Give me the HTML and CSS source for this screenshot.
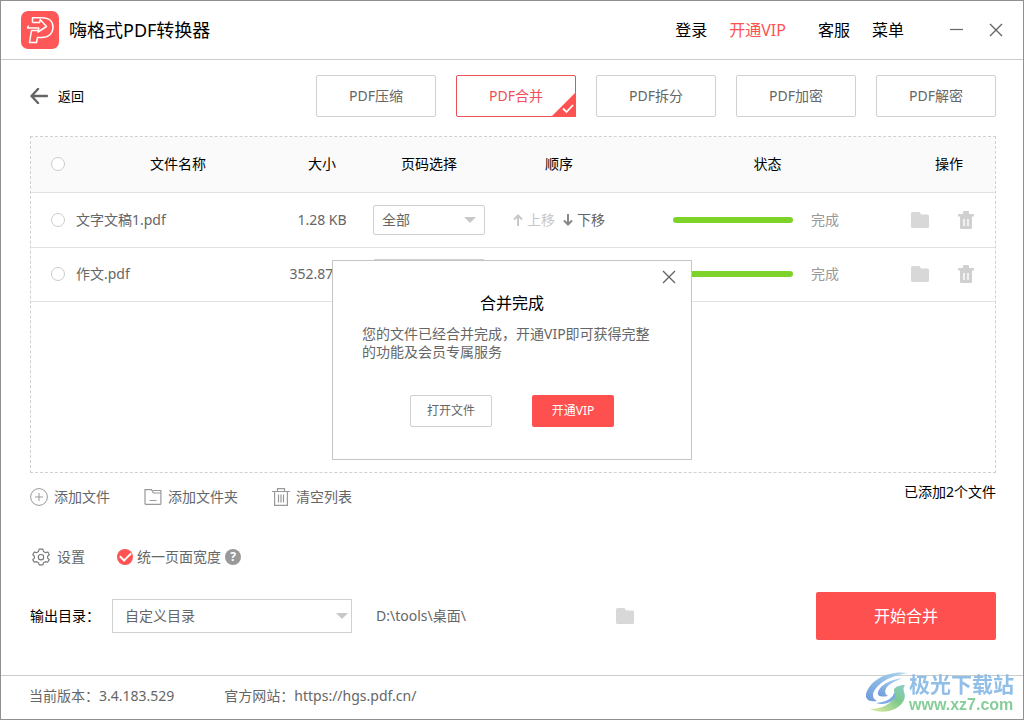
FILE: index.html
```html
<!DOCTYPE html>
<html lang="zh-CN">
<head>
<meta charset="utf-8">
<meta name="viewport" content="width=device-width, initial-scale=1">
<title>嗨格式PDF转换器</title>
<link rel="stylesheet" href="styles.css">
</head>
<body>
<svg class="sprite" aria-hidden="true">
  <symbol id="folder" viewBox="0 0 18 16"><path d="M1.500 0H8Q9 0 9.500 1.500L10 2.500H16.500Q18 2.500 18 4V14.500Q18 16 16.500 16H1.500Q0 16 0 14.500V1.500Q0 0 1.500 0Z" fill="#d8d8d8"/></symbol>
  <symbol id="trash" viewBox="0 0 16 18"><path d="M5 3V1Q5 0 6 0H10Q11 0 11 1V3H15.500Q16 3 16 3.500V5.500H14V16.500Q14 18 12.500 18H3.500Q2 18 2 16.500V5.500H0V3.500Q0 3 .5 3Z" fill="#d0d0d0"/><path d="M6 8V15M10 8V15" stroke="#fff" stroke-width="1.400"/></symbol>
  <symbol id="arrow-up" viewBox="0 0 10 12"><path d="M5 12V2M1 5.500 5 1.500 9 5.500" fill="none" stroke="currentColor" stroke-width="2"/></symbol>
  <symbol id="arrow-down" viewBox="0 0 10 12"><path d="M5 0V10M1 6.500 5 10.500 9 6.500" fill="none" stroke="currentColor" stroke-width="2"/></symbol>
  <symbol id="close" viewBox="0 0 14 14"><path d="M1 1 13 13M13 1 1 13" stroke="#666" stroke-width="1.400"/></symbol>
</svg>
<div class="app">
  <header class="titlebar">
    <svg class="logo" viewBox="0 0 38 38" aria-hidden="true">
      <rect width="38" height="38" rx="7" fill="#ff5757"/>
      <path d="M11.500 11.500V6.800H21C28 6.800 32 10.500 32 16C32 22.500 27.500 26.500 20.500 26.500H16.500L15.500 31.500H8.500L10.500 19.500H17.800M11.500 11.500H18.500L19.300 8.800L25.500 15.500L17 21L17.800 17H6.500L7.500 14.500" fill="none" stroke="#fff" stroke-width="1.500" stroke-linejoin="round"/>
    </svg>
    <h1 class="app-name">嗨格式PDF转换器</h1>
    <nav class="menu">
      <a href="#">登录</a>
      <a href="#" class="vip">开通VIP</a>
      <a href="#">客服</a>
      <a href="#">菜单</a>
    </nav>
    <div class="window-controls">
      <button type="button" class="plain" aria-label="最小化"><svg width="14" height="14" viewBox="0 0 14 14"><path d="M0 6.500H13" stroke="#666" stroke-width="1.200"/></svg></button>
      <button type="button" class="plain" aria-label="关闭"><svg width="14" height="14"><use href="#close"/></svg></button>
    </div>
  </header>

  <main class="content">
    <div class="toolbar">
      <button type="button" class="plain back"><svg width="18" height="16" viewBox="0 0 18 16"><path d="M17 8H2M8 1 1.500 8 8 15" fill="none" stroke="#666" stroke-width="2.400" stroke-linecap="round" stroke-linejoin="round"/></svg>返回</button>
      <div class="tabs">
        <button type="button" class="tab">PDF压缩</button>
        <button type="button" class="tab active">PDF合并<svg class="corner" width="25" height="25" viewBox="0 0 25 25"><path d="M25 0V25H0Z" fill="#ff5252"/><path d="M12 16.500 15.500 20 22 13" fill="none" stroke="#fff" stroke-width="1.800"/></svg></button>
        <button type="button" class="tab">PDF拆分</button>
        <button type="button" class="tab">PDF加密</button>
        <button type="button" class="tab">PDF解密</button>
      </div>
    </div>

    <section class="file-panel">
      <table class="files">
        <colgroup><col class="c-check"><col class="c-name"><col class="c-size"><col class="c-page"><col class="c-order"><col><col class="c-ops"></colgroup>
        <thead>
          <tr>
            <th class="check"><input type="checkbox" class="round" aria-label="全选"></th>
            <th>文件名称</th><th>大小</th><th>页码选择</th><th>顺序</th><th class="status-head">状态</th><th>操作</th>
          </tr>
        </thead>
        <tbody>
          <tr>
            <td class="check"><input type="checkbox" class="round" id="f1"></td>
            <td><label for="f1">文字文稿1.pdf</label></td>
            <td class="size">1.28 KB</td>
            <td class="page"><span class="select-box"><select aria-label="页码选择"><option>全部</option></select></span></td>
            <td><div class="order"><button type="button" class="plain" disabled><svg width="10" height="12"><use href="#arrow-up"/></svg>上移</button><button type="button" class="plain"><svg width="10" height="12"><use href="#arrow-down"/></svg>下移</button></div></td>
            <td><div class="status"><span class="bar"></span>完成</div></td>
            <td><div class="ops"><button type="button" class="plain" aria-label="打开文件夹"><svg width="18" height="16"><use href="#folder"/></svg></button><button type="button" class="plain" aria-label="删除"><svg width="16" height="18"><use href="#trash"/></svg></button></div></td>
          </tr>
          <tr>
            <td class="check"><input type="checkbox" class="round" id="f2"></td>
            <td><label for="f2">作文.pdf</label></td>
            <td class="size">352.87 KB</td>
            <td class="page"><span class="select-box"><select aria-label="页码选择"><option>全部</option></select></span></td>
            <td></td>
            <td><div class="status"><span class="bar"></span>完成</div></td>
            <td><div class="ops"><button type="button" class="plain" aria-label="打开文件夹"><svg width="18" height="16"><use href="#folder"/></svg></button><button type="button" class="plain" aria-label="删除"><svg width="16" height="18"><use href="#trash"/></svg></button></div></td>
          </tr>
        </tbody>
      </table>
    </section>

    <div class="list-actions">
      <button type="button" class="plain"><svg width="18" height="18" viewBox="0 0 18 18" fill="none" stroke="#999"><circle cx="9" cy="9" r="8.400"/><path d="M9 5V13M5 9H13"/></svg>添加文件</button>
      <button type="button" class="plain"><svg width="18" height="18" viewBox="0 0 18 18" fill="none" stroke="#999" stroke-width="1.200"><path d="M1 15.400V1.600H7.500L9.500 5H16.900V15.400Q16.900 16.400 15.900 16.400H2Q1 16.400 1 15.400ZM9 2.500H16.900V5M5.500 12.500H12.500"/></svg>添加文件夹</button>
      <button type="button" class="plain"><svg width="18" height="18" viewBox="0 0 18 18" fill="none" stroke="#999" stroke-width="1.200"><path d="M0 3.500H18M5.500 3.500V.6H12.500V3.500M2.600 3.500V17.400H15.400V3.500M6.500 6.500V14.500M9 6.500V14.500M11.500 6.500V14.500"/></svg>清空列表</button>
      <p class="count">已添加2个文件</p>
    </div>

    <div class="options">
      <button type="button" class="plain"><svg width="18" height="18" viewBox="0 0 24 24" fill="none" stroke="#777" stroke-width="1.500" stroke-linejoin="round"><path d="M9.500 1.500H14.500L15.300 4.600L18.200 6.200L21.200 5.300L23 9L20.800 11V13.500L23 15.500L20.800 19L18 18.200L15.300 19.600L14.500 22.500H9.500L8.700 19.600L6 18.200L3 19L1 15.500L3.200 13.500V11L1 9L3 5.300L6 6.200L8.700 4.600Z"/><circle cx="12" cy="12.200" r="3.600"/></svg>设置</button>
      <div class="unify">
        <input type="checkbox" class="round filled" id="unify" checked>
        <label for="unify">统一页面宽度</label>
        <button type="button" class="help" aria-label="帮助">?</button>
      </div>
    </div>

    <div class="output">
      <label for="dir">输出目录：</label>
      <span class="select-box dir"><select id="dir"><option>自定义目录</option></select></span>
      <span class="path">D:\tools\桌面\</span>
      <button type="button" class="plain" aria-label="选择文件夹"><svg width="18" height="16"><use href="#folder"/></svg></button>
      <button type="button" class="primary start">开始合并</button>
    </div>
  </main>

  <footer class="footer">
    <span>当前版本：3.4.183.529</span>
    <span>官方网站：<a href="https://hgs.pdf.cn/">https://hgs.pdf.cn/</a></span>
  </footer>
</div>

<div class="overlay">
  <section class="dialog" role="dialog" aria-labelledby="dialog-title">
    <button type="button" class="plain dialog-close" aria-label="关闭"><svg width="14" height="14"><use href="#close"/></svg></button>
    <h2 id="dialog-title">合并完成</h2>
    <p>您的文件已经合并完成，开通VIP即可获得完整的功能及会员专属服务</p>
    <div class="dialog-actions">
      <button type="button" class="secondary">打开文件</button>
      <button type="button" class="primary">开通VIP</button>
    </div>
  </section>
</div>

<div class="watermark">
  <svg width="42" height="42" viewBox="0 0 42 42" aria-hidden="true">
    <defs><linearGradient id="wm" x1="0" y1="1" x2="1" y2="0"><stop offset="0" stop-color="#5f8fd8"/><stop offset="1" stop-color="#a5d5ee"/></linearGradient>
    <linearGradient id="wm2" x1="0" y1="1" x2="1" y2="0"><stop offset="0" stop-color="#e2ec9a"/><stop offset=".6" stop-color="#6fc47e"/><stop offset="1" stop-color="#7fc9c9"/></linearGradient></defs>
    <path d="M42 1C22-2 4 8 0 22C-1 28 4 30 11 29C5 26 6 20 12 14C19 7 29 3 42 1Z" fill="url(#wm)"/>
    <path d="M36 6C22 8 14 14 12 20C11 25 16 25 22 24C17 21 19 15 26 11C29 9 33 8 36 6Z" fill="url(#wm)"/>
    <path d="M39 13C32 13 27 16 28 19C29 22 30 25 26 29C21 34 13 37 4 37C16 43 33 39 38 28C41 21 35 19 39 13Z" fill="url(#wm2)"/>
    <path d="M28 20C28 26 20 30 10 31C18 34 29 30 30 23Z" fill="#6fa3df"/>
  </svg>
  <div><strong>极光下载站</strong><span>www.xz7.com</span></div>
</div>
</body>
</html>
```
FILE: styles.css
```css
* { box-sizing: border-box; }

body {
  margin: 0;
  background: #fff;
  color: #666;
  font: 14px/20px "Noto Sans", "Noto Sans CJK SC", sans-serif;
}

h1, h2, p { margin: 0; font-weight: 400; }
a { color: inherit; text-decoration: none; }
button, input, select { font: inherit; color: inherit; margin: 0; }
button { cursor: pointer; padding: 0; }
svg { display: block; flex: none; }
.sprite { position: absolute; width: 0; height: 0; }

.plain {
  display: flex;
  align-items: center;
  gap: 6px;
  border: 0;
  background: none;
  white-space: nowrap;
}

.app {
  display: flex;
  flex-direction: column;
  min-height: 100vh;
  border: 1px solid #909090;
}

.titlebar {
  display: flex;
  align-items: center;
  height: 59px;
  padding: 0 20px;
  border-bottom: 1px solid #ccc;
  color: #000;
}
.logo { width: 38px; height: 38px; margin-right: 10px; }
.app-name { font-size: 18px; line-height: 24px; }
.menu { display: flex; gap: 22px; margin-left: auto; font-size: 16px; line-height: 24px; }
.vip { color: #ff5252; margin-right: 10px; }
.window-controls { display: flex; gap: 25px; margin-left: 46px; }

.content { flex: 1; padding: 15px 27px 0 29px; }

.toolbar { display: flex; align-items: center; justify-content: space-between; margin-bottom: 19px; }
.back { gap: 10px; color: #000; font-size: 13px; }
.tabs { display: flex; gap: 20px; }
.tab {
  position: relative;
  width: 120px;
  height: 42px;
  border: 1px solid #d0d0d0;
  border-radius: 2px;
  background: #fff;
}
.tab.active { border-color: #e8505a; color: #f0505a; }
.corner { position: absolute; right: -1px; bottom: -1px; }

.file-panel { min-height: 337px; border: 1px dashed #d0d0d0; }
.files { width: 100%; border-collapse: collapse; table-layout: fixed; }
.c-check { width: 45px; }
.c-name { width: 204px; }
.c-size { width: 84px; }
.c-page, .c-order { width: 130px; }
.c-ops { width: 92px; }
.files th, .files td { height: 54px; padding: 0; border-bottom: 1px solid #e2e2e2; white-space: nowrap; }
.files th, .files tr:first-child td { height: 55px; }
.files th { background: #fafafa; color: #000; font-weight: 400; }
.files td { text-align: left; }
.files .check { padding-left: 20px; text-align: left; }
.files .status-head { padding-left: 8px; }
.files .size { text-align: center; }
.files .page { padding: 0 9px; }

.round {
  display: block;
  appearance: none;
  width: 14px;
  height: 14px;
  border: 1px solid #ccc;
  border-radius: 50%;
  background: #fff;
}
.round.filled {
  display: grid;
  place-items: center;
  width: 16px;
  height: 16px;
  border: 0;
  background: #ff5252;
}
.round.filled::before {
  content: "";
  width: 9px;
  height: 5px;
  margin-bottom: 3px;
  border: solid #fff;
  border-width: 0 0 2px 2px;
  transform: rotate(-45deg);
}

.select-box { position: relative; display: block; }
.select-box::after {
  content: "";
  position: absolute;
  right: 9px;
  top: 50%;
  margin-top: -3px;
  border: 6px solid transparent;
  border-top-color: #c8c8c8;
  border-bottom: 0;
  pointer-events: none;
}
.select-box select {
  display: block;
  appearance: none;
  width: 100%;
  height: 30px;
  padding: 0 8px;
  border: 1px solid #d0d0d0;
  border-radius: 2px;
  background: #fff;
}

.order { display: flex; justify-content: center; gap: 8px; }
.order .plain { gap: 4px; }
.order .plain:disabled { color: #c8c8c8; }
.order svg { color: #888; }
.order :disabled svg { color: #c8c8c8; }
.status { display: flex; align-items: center; gap: 18px; padding-left: 49px; color: #999; }
.bar { width: 120px; height: 6px; border-radius: 3px; background: #7ed32b; }
.ops { display: flex; align-items: center; gap: 29px; padding-left: 8px; }

.list-actions { display: flex; align-items: center; gap: 34px; margin-top: 9px; }
.count { margin-left: auto; padding-bottom: 10px; color: #000; }

.options { display: flex; align-items: center; gap: 32px; margin-top: 35px; padding-left: 2px; }
.options > .plain { gap: 7px; }
.unify { display: flex; align-items: center; gap: 4px; }
.help {
  width: 16px;
  height: 16px;
  border: 0;
  border-radius: 50%;
  background: #999;
  color: #fff;
  font-size: 12px;
  font-weight: 700;
  line-height: 16px;
}

.output { display: flex; align-items: center; margin-top: 25px; }
.output > label { color: #000; width: 82px; white-space: nowrap; }
.dir { width: 240px; margin-right: 24px; }
.dir::after { right: 4px; }
.dir select { height: 34px; padding: 0 12px; border-radius: 0; }
.path { width: 240px; }

.primary { border: 0; border-radius: 2px; background: #ff5050; color: #fff; }
.secondary { border: 1px solid #d0d0d0; border-radius: 2px; background: #fff; }
.start { width: 180px; height: 48px; margin-left: auto; font-size: 16px; }

.footer {
  display: flex;
  align-items: center;
  gap: 50px;
  height: 44px;
  padding: 0 28px 4px;
  border-top: 1px solid #ccc;
}

.overlay { position: fixed; inset: 0; display: grid; place-items: center; }
.dialog {
  position: relative;
  width: 360px;
  padding: 30px 29px 32px;
  border: 1px solid #c4c4c4;
  background: #fff;
}
.dialog-close { position: absolute; top: 9px; right: 15px; }
.dialog h2 { color: #000; font-size: 16px; line-height: 24px; text-align: center; }
.dialog p { margin-top: 10px; line-height: 18px; }
.dialog-actions { display: flex; justify-content: center; gap: 40px; margin-top: 34px; }
.dialog-actions button { width: 82px; height: 32px; font-size: 12px; }

.watermark {
  position: fixed;
  right: 10px;
  bottom: 6px;
  display: flex;
  align-items: center;
  gap: 1px;
  opacity: 0.9;
  pointer-events: none;
}
.watermark strong, .watermark span { display: block; white-space: nowrap; }
.watermark strong { color: #86b8e6; font-size: 21px; line-height: 24px; }
.watermark span { color: #7ac88e; font: 700 16px/18px "Liberation Sans", sans-serif; }
```
